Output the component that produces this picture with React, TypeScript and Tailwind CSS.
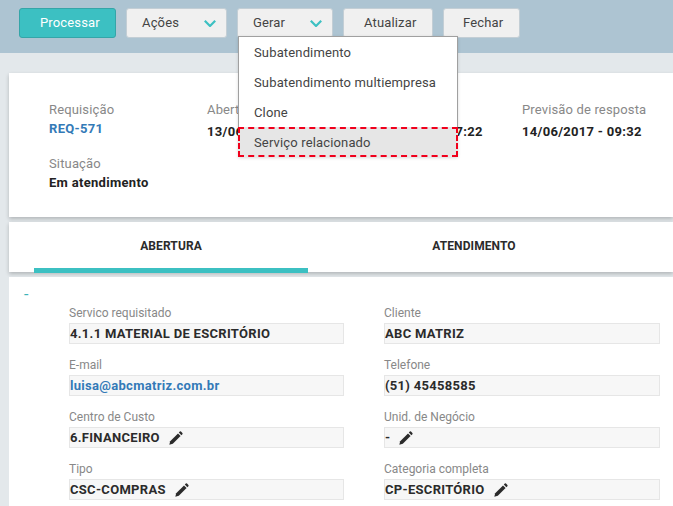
import React from "react";

function Chevron() {
  return (
    <svg width="12" height="7" viewBox="0 0 12 7" fill="none" stroke="#3cc0c2" strokeWidth="2.2">
      <path d="M0.8 0.8 L6 6 L11.2 0.8" />
    </svg>
  );
}

function Pencil() {
  return (
    <svg width="14" height="14" viewBox="0 0 14 14" fill="#2b2b2b" className="shrink-0">
      <path d="M0.3 13.7 L1.2 10.2 L9 2.4 L11.6 5 L3.8 12.8 Z" />
      <path d="M9.8 1.6 L10.8 0.6 Q11.4 0.1 12 0.6 L13.4 2 Q13.9 2.6 13.4 3.2 L12.4 4.2 Z" />
    </svg>
  );
}

function Btn({ w, label, chevron, pad }: { w: string; label: string; chevron?: boolean; pad: string }) {
  return (
    <div className={`${w} ${pad} h-[30px] flex items-center rounded-[3px] bg-[#f0f0f0] border border-[#c3ced5] text-[13px] tracking-[0.15px] text-[#444]`}>
      <span>{label}</span>
      {chevron && <span className="ml-auto flex"><Chevron /></span>}
    </div>
  );
}

function Info({ label, value, blue, gap }: { label: string; value: string; blue?: boolean; gap: string }) {
  return (
    <div className="flex flex-col">
      <span className="text-[13px] leading-[18px] tracking-[0.15px] text-[#888]">{label}</span>
      <span className={`text-[13px] font-bold leading-[18px] tracking-[0.3px] ${gap} ${blue ? "text-[#337ab7]" : "text-[#222]"}`}>{value}</span>
    </div>
  );
}

function Field({ label, value, blue, edit }: { label: string; value: string; blue?: boolean; edit?: boolean }) {
  return (
    <div className="flex flex-col h-[52px]">
      <span className="h-[21px] text-[12px] leading-[23px] text-[#888]">{label}</span>
      <div className={`h-[21px] flex items-center gap-[9px] bg-[#f7f7f7] border border-[#e6e6e6] text-[13px] font-bold tracking-[0.3px] ${blue ? "text-[#337ab7]" : "text-[#2b2b2b]"}`}>
        <span className="leading-[17px]">{value}</span>
        {edit && <Pencil />}
      </div>
    </div>
  );
}

function MenuItem({ label }: { label: string }) {
  return <div className="h-[30px] flex items-center pl-[15px] pt-[1px]">{label}</div>;
}

export default function App() {
  return (
    <div className="w-[673px] h-[506px] overflow-hidden bg-[#e3e8eb] flex flex-col" style={{ fontFamily: "Roboto, sans-serif" }}>
      <div className="h-[53px] shrink-0 bg-[#adc4d2] pl-[19px] pt-[8px] flex items-start gap-[10px]">
        <div className="w-[97px] h-[30px] flex items-center pl-[20px] rounded-[3px] bg-[#3cc0c2] border border-[#35a5a8] text-[13px] tracking-[0.15px] text-white">Processar</div>
        <Btn w="w-[101px]" pad="pl-[15px] pr-[10px]" label="Ações" chevron />
        <div className="relative">
          <Btn w="w-[96px]" pad="pl-[15px] pr-[10px]" label="Gerar" chevron />
          <div className="absolute z-10 left-[1px] top-[28px] w-[220px] bg-white border border-[#a0a0a0] text-[13px] tracking-[0.15px] text-[#444] shadow-[0_1px_3px_rgba(0,0,0,0.15)]">
            <MenuItem label="Subatendimento" />
            <MenuItem label="Subatendimento multiempresa" />
            <MenuItem label="Clone" />
            <div className="h-[30px] -mx-[1px] -mb-[1px] flex items-center pl-[14px] pt-[1px] bg-[#e6e6e6] border-2 border-dashed border-[#f0001c]">Serviço relacionado</div>
          </div>
        </div>
        <Btn w="w-[90px]" pad="pl-[20px]" label="Atualizar" />
        <Btn w="w-[77px]" pad="pl-[19px]" label="Fechar" />
      </div>

      <div className="ml-[9px] mt-[20px] h-[144px] shrink-0 bg-white shadow-[0_2px_4px_rgba(0,0,0,0.22)] pl-[40px] pt-[28px]">
        <div className="grid grid-cols-[158px_156px_159px_1fr]">
          <Info label="Requisição" value="REQ-571" blue gap="mt-[1px]" />
          <Info label="Abertura" value="13/06/2017 - 09:32" gap="mt-[4px]" />
          <Info label="Alteração" value="13/06/2017 - 17:22" gap="mt-[4px]" />
          <Info label="Previsão de resposta" value="14/06/2017 - 09:32" gap="mt-[4px]" />
        </div>
        <div className="mt-[14px]">
          <Info label="Situação" value="Em atendimento" gap="mt-[1px]" />
        </div>
      </div>

      <div className="ml-[9px] mt-[5px] h-[50px] shrink-0 bg-white shadow-[0_2px_4px_rgba(0,0,0,0.22)] pl-[25px] flex text-[12px] font-bold tracking-[0.1px] text-[#2b2b2b]">
        <div className="w-[274px] h-[51px] flex items-center justify-center pt-[2px] border-b-[5px] border-[#3cc0c2]">ABERTURA</div>
        <div className="w-[332px] h-[50px] flex items-center justify-center pb-[2px]">ATENDIMENTO</div>
      </div>

      <div className="ml-[9px] mt-[5px] flex-1 bg-white">
        <div className="h-[25px] pl-[15px] pt-[10px] text-[16px] leading-[16px] text-[#3cb4b8]">-</div>
        <div className="ml-[60px] grid grid-cols-[275px_276px] gap-x-[40px]">
          <Field label="Servico requisitado" value="4.1.1 MATERIAL DE ESCRITÓRIO" />
          <Field label="Cliente" value="ABC MATRIZ" />
          <Field label="E-mail" value="luisa@abcmatriz.com.br" blue />
          <Field label="Telefone" value="(51) 45458585" />
          <Field label="Centro de Custo" value="6.FINANCEIRO" edit />
          <Field label="Unid. de Negócio" value="-" edit />
          <Field label="Tipo" value="CSC-COMPRAS" edit />
          <Field label="Categoria completa" value="CP-ESCRITÓRIO" edit />
        </div>
      </div>
    </div>
  );
}
